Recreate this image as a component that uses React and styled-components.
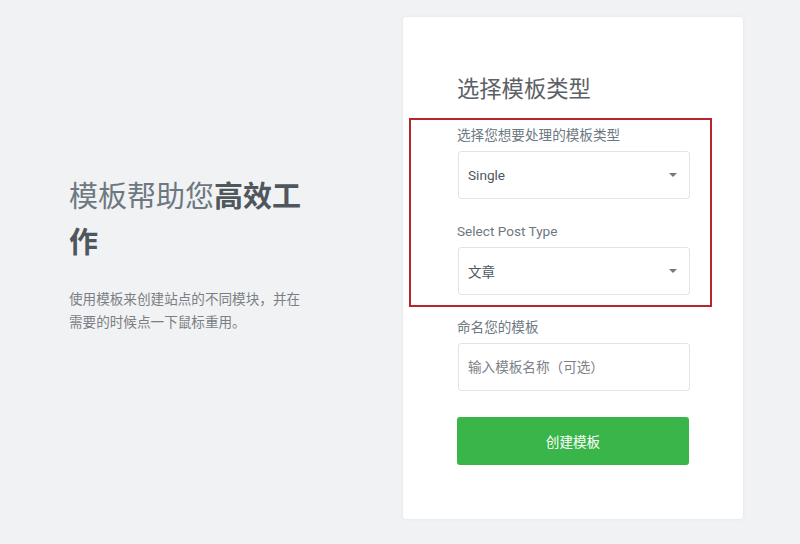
import React from "react";
import styled, { createGlobalStyle } from "styled-components";

const Global = createGlobalStyle`
  html, body { margin: 0; padding: 0; background: #f1f2f3; }
  body { font-family: Roboto, "Noto Sans CJK SC", sans-serif; }
  * { box-sizing: border-box; }
`;

const Page = styled.div`
  display: flex;
  align-items: flex-start;
  width: 800px;
  height: 544px;
  padding: 17px 0 0 69px;
`;

const Intro = styled.div`
  width: 334px;
  padding-top: 157px;
`;

const Heading = styled.h1`
  margin: 0;
  max-width: 245px;
  font-size: 29px;
  line-height: 46px;
  font-weight: 400;
  color: #6d7882;
  b { font-weight: 700; color: #4f565d; }
`;

const Lead = styled.p`
  margin: 22px 0 0;
  max-width: 236px;
  font-size: 13.6px;
  line-height: 23px;
  color: #7a7f85;
`;

const Card = styled.div`
  position: relative;
  width: 340px;
  height: 502px;
  background: #fff;
  border-radius: 3px;
  box-shadow: 0 0 4px rgba(0, 0, 0, 0.06);
  padding: 58px 0 0 54px;
`;

const Title = styled.h2`
  margin: 0 0 23px;
  font-size: 22.3px;
  line-height: 28px;
  font-weight: 400;
  color: #5b6066;
`;

const Field = styled.div`
  display: flex;
  flex-direction: column;
  gap: 7px;
  width: 233px;
  margin-bottom: ${(p) => (p.$last ? "0" : "23px")};
`;

const Label = styled.label`
  font-size: 13.6px;
  line-height: 18px;
  color: #6d7882;
`;

const Select = styled.div`
  position: relative;
  display: flex;
  align-items: center;
  height: 48px;
  margin-left: 1px;
  padding-left: 9px;
  border: 1px solid #e2e4e6;
  border-radius: 3px;
  font-size: 13.6px;
  color: #4f565d;
  &::after {
    content: "";
    position: absolute;
    right: 12px;
    top: 21px;
    border-left: 4px solid transparent;
    border-right: 4px solid transparent;
    border-top: 4px solid #6d7882;
  }
`;

const Input = styled.input`
  height: 48px;
  margin-left: 1px;
  padding: 0 9px;
  border: 1px solid #e2e4e6;
  border-radius: 3px;
  font: 13.6px Roboto, "Noto Sans CJK SC", sans-serif;
  color: #4f565d;
  outline: none;
  &::placeholder { color: #7d8186; }
`;

const Button = styled.button`
  display: block;
  width: 232px;
  height: 48px;
  margin-top: 26px;
  border: 0;
  border-radius: 3px;
  background: #39b54a;
  color: #fff;
  font: 13.6px Roboto, "Noto Sans CJK SC", sans-serif;
`;

const Highlight = styled.div`
  position: absolute;
  left: 6px;
  top: 101px;
  width: 303px;
  height: 189px;
  border: 2px solid #b8262c;
  pointer-events: none;
`;

export default function App() {
  return (
    <>
      <Global />
      <Page>
        <Intro>
          <Heading>
            模板帮助您<b>高效工作</b>
          </Heading>
          <Lead>使用模板来创建站点的不同模块，并在需要的时候点一下鼠标重用。</Lead>
        </Intro>
        <Card>
          <Title>选择模板类型</Title>
          <Field>
            <Label>选择您想要处理的模板类型</Label>
            <Select>Single</Select>
          </Field>
          <Field>
            <Label>Select Post Type</Label>
            <Select>文章</Select>
          </Field>
          <Field $last>
            <Label>命名您的模板</Label>
            <Input placeholder="输入模板名称（可选）" />
          </Field>
          <Button>创建模板</Button>
          <Highlight />
        </Card>
      </Page>
    </>
  );
}
